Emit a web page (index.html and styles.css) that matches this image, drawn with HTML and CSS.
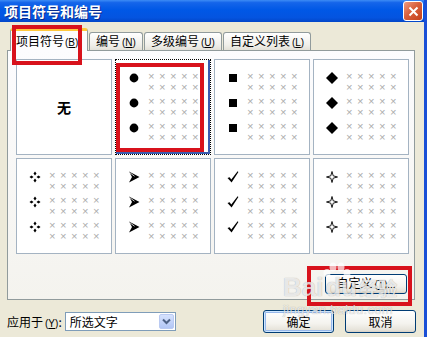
FILE: index.html
```html
<!DOCTYPE HTML>
<html lang="zh">
<head>
    <meta charset="UTF-8">
    <title>项目符号和编号</title>
    <link rel="stylesheet" href="styles.css">
</head>
<body>

    <!-- Bullet shapes -->
    <svg class="defs" width="0" height="0">
        <symbol id="dot" viewBox="0 0 12 12"><circle cx="6" cy="6" r="4.4"/></symbol>
        <symbol id="square" viewBox="0 0 12 12"><rect x="2" y="2" width="8" height="8"/></symbol>
        <symbol id="diamond" viewBox="0 0 12 12"><polygon points="6,0 12,6 6,12 0,6"/></symbol>
        <symbol id="cross" viewBox="0 0 12 12">
            <polygon points="6,0.5 7.5,2.5 6,4.5 4.5,2.5"/>
            <polygon points="6,7.5 7.5,9.5 6,11.5 4.5,9.5"/>
            <polygon points="0.5,6 2.5,4.5 4.5,6 2.5,7.5"/>
            <polygon points="7.5,6 9.5,4.5 11.5,6 9.5,7.5"/>
        </symbol>
        <symbol id="arrow" viewBox="0 0 12 12">
            <polygon points="1,0.5 11.5,6 1,11.5 4,6"/>
            <polyline points="1.5,1.5 6.5,5.2" fill="none" stroke="#fff" stroke-width="0.8"/>
        </symbol>
        <symbol id="check" viewBox="0 0 12 12"><polygon points="0.5,7 2.6,6.2 4.3,8.6 10.6,0.3 11.4,0.9 4.6,11.6"/></symbol>
        <symbol id="star" viewBox="0 0 12 12"><path d="M6 0.5 L7.2 4.8 L11.5 6 L7.2 7.2 L6 11.5 L4.8 7.2 L0.5 6 L4.8 4.8 Z" fill="#fff" stroke="#000" stroke-width="0.9"/></symbol>
    </svg>

    <div class="window">
        <div class="titlebar">
            <span class="title">项目符号和编号</span>
            <span class="close">
                <svg width="11" height="11" viewBox="0 0 11 11"><path d="M1.5 1.5 L9.5 9.5 M9.5 1.5 L1.5 9.5" stroke="#fff" stroke-width="2"/></svg>
            </span>
        </div>

        <div class="client">
            <div class="tabs">
                <div class="tab active">项目符号<span class="key">(<u>B</u>)</span></div>
                <div class="tab">编号<span class="key">(<u>N</u>)</span></div>
                <div class="tab">多级编号<span class="key">(<u>U</u>)</span></div>
                <div class="tab">自定义列表<span class="key">(<u>L</u>)</span></div>
            </div>

            <div class="panel">
                <div class="grid">
                    <div class="cell none">无</div>

                    <div class="cell selected">
                        <div class="group"><svg class="b"><use href="#dot"/></svg><div class="x">×××××<br>×××××</div></div>
                        <div class="group"><svg class="b"><use href="#dot"/></svg><div class="x">×××××<br>×××××</div></div>
                        <div class="group"><svg class="b"><use href="#dot"/></svg><div class="x">×××××<br>×××××</div></div>
                    </div>

                    <div class="cell">
                        <div class="group"><svg class="b"><use href="#square"/></svg><div class="x">×××××<br>×××××</div></div>
                        <div class="group"><svg class="b"><use href="#square"/></svg><div class="x">×××××<br>×××××</div></div>
                        <div class="group"><svg class="b"><use href="#square"/></svg><div class="x">×××××<br>×××××</div></div>
                    </div>

                    <div class="cell">
                        <div class="group"><svg class="b"><use href="#diamond"/></svg><div class="x">×××××<br>×××××</div></div>
                        <div class="group"><svg class="b"><use href="#diamond"/></svg><div class="x">×××××<br>×××××</div></div>
                        <div class="group"><svg class="b"><use href="#diamond"/></svg><div class="x">×××××<br>×××××</div></div>
                    </div>

                    <div class="cell">
                        <div class="group"><svg class="b"><use href="#cross"/></svg><div class="x">×××××<br>×××××</div></div>
                        <div class="group"><svg class="b"><use href="#cross"/></svg><div class="x">×××××<br>×××××</div></div>
                        <div class="group"><svg class="b"><use href="#cross"/></svg><div class="x">×××××<br>×××××</div></div>
                    </div>

                    <div class="cell">
                        <div class="group"><svg class="b"><use href="#arrow"/></svg><div class="x">×××××<br>×××××</div></div>
                        <div class="group"><svg class="b"><use href="#arrow"/></svg><div class="x">×××××<br>×××××</div></div>
                        <div class="group"><svg class="b"><use href="#arrow"/></svg><div class="x">×××××<br>×××××</div></div>
                    </div>

                    <div class="cell">
                        <div class="group"><svg class="b"><use href="#check"/></svg><div class="x">×××××<br>×××××</div></div>
                        <div class="group"><svg class="b"><use href="#check"/></svg><div class="x">×××××<br>×××××</div></div>
                        <div class="group"><svg class="b"><use href="#check"/></svg><div class="x">×××××<br>×××××</div></div>
                    </div>

                    <div class="cell">
                        <div class="group"><svg class="b"><use href="#star"/></svg><div class="x">×××××<br>×××××</div></div>
                        <div class="group"><svg class="b"><use href="#star"/></svg><div class="x">×××××<br>×××××</div></div>
                        <div class="group"><svg class="b"><use href="#star"/></svg><div class="x">×××××<br>×××××</div></div>
                    </div>
                </div>

                <div class="custom-row">
                    <button class="btn custom">自定义<span class="key">(<u>T</u>)...</span></button>
                </div>
            </div>

            <div class="footer">
                <span class="label">应用于<span class="key">(<u>Y</u>)</span>:</span>
                <div class="select">
                    <span class="value">所选文字</span>
                    <span class="arrow">
                        <svg width="9" height="7" viewBox="0 0 9 7"><path d="M1 1.5 L4.5 5 L8 1.5" fill="none" stroke="#4d6185" stroke-width="2"/></svg>
                    </span>
                </div>
                <div class="actions">
                    <button class="btn default">确定</button>
                    <button class="btn">取消</button>
                </div>
            </div>
        </div>

        <!-- red annotation boxes -->
        <div class="mark mark-tab"></div>
        <div class="mark mark-cell"></div>
        <div class="mark mark-btn"></div>

        <!-- watermark -->
        <div class="watermark">
            <div class="wm-logo">Bai<span class="wm-du">du</span><span class="wm-cn">经验</span></div>
            <div class="wm-url">jingyan.baidu.com</div>
            <svg class="wm-paw" width="30" height="16" viewBox="0 0 30 16">
                <ellipse cx="6" cy="11" rx="3.5" ry="4"/>
                <ellipse cx="12" cy="5" rx="3.5" ry="4.5"/>
                <ellipse cx="20" cy="5" rx="3.5" ry="4.5"/>
                <ellipse cx="26" cy="11" rx="3.5" ry="4"/>
            </svg>
        </div>
    </div>

</body>
</html>
```

FILE: styles.css
```css
* {
    margin: 0;
    padding: 0;
    box-sizing: border-box;
}

body {
    font-family: "Noto Sans CJK SC", sans-serif;
    font-size: 12px;
    color: #000;
    background: #ece9d8;
}

.defs {
    position: absolute;
}

.window {
    position: relative;
    width: 427px;
    height: 337px;
    background: #ece9d8;
    border-right: 3px solid #1a4fd6;
    overflow: hidden;
}

/* Title bar */
.titlebar {
    height: 22px;
    display: flex;
    align-items: center;
    padding: 0 1px 0 4px;
    background: linear-gradient(to bottom, #3d8cf5 0%, #1565ea 12%, #0058e6 45%, #0454e0 80%, #0346c8 100%);
}

.title {
    color: #fff;
    font-weight: bold;
    font-size: 14px;
    line-height: 22px;
    text-shadow: 1px 1px 0 #0a2a8a;
}

.close {
    margin-left: auto;
    width: 20px;
    height: 20px;
    border: 1px solid #fff;
    border-radius: 3px;
    background: linear-gradient(135deg, #ef9b80 0%, #d9603c 45%, #c4401c 100%);
    display: flex;
    align-items: center;
    justify-content: center;
}

/* Tabs */
.client {
    display: flex;
    flex-direction: column;
}

.tabs {
    display: flex;
    align-items: flex-end;
    height: 28px;
    padding-left: 10px;
    position: relative;
    z-index: 1;
}

.tab {
    height: 18px;
    padding: 0 6px;
    margin-right: 1px;
    border: 1px solid #919b9c;
    border-bottom: none;
    border-radius: 3px 3px 0 0;
    background: linear-gradient(to bottom, #ffffff, #f0efea 70%, #e3e1d8);
    line-height: 16px;
    white-space: nowrap;
}

.tab.active {
    width: 78px;
    height: 23px;
    padding: 0 0 0 5px;
    margin-bottom: -1px;
    border-top: 3px solid #ffc83c;
    background: #fcfcfe;
    line-height: 19px;
}

.key {
    font-family: "Liberation Sans", sans-serif;
    font-size: 10px;
    margin-left: 2px;
}

.tab.active .key {
    margin-left: 1px;
}

/* Panel */
.panel {
    height: 250px;
    margin: 0 9px 0 7px;
    padding: 8px 5px 0 8px;
    border: 1px solid #919b9c;
    background: linear-gradient(to bottom, #fcfcfe, #f4f3ee);
}

.grid {
    display: grid;
    grid-template-columns: repeat(4, 96px);
    grid-auto-rows: 96px;
    gap: 3px;
}

.cell {
    background: #fff;
    border: 1px solid #a4b3c2;
    padding: 12px 0 0 12px;
}

.cell.none {
    display: flex;
    align-items: center;
    justify-content: center;
    padding: 0;
    font-size: 14px;
    font-weight: bold;
}

.cell.selected {
    border: 1px dotted #000;
    box-shadow: inset -2px 0 0 #3a5bb0, inset 0 -2px 0 #3a5bb0;
}

.group {
    display: flex;
    gap: 8px;
    margin-bottom: 3px;
}

.b {
    width: 12px;
    height: 12px;
    flex: none;
}

.x {
    font-family: "Liberation Mono", monospace;
    font-size: 11px;
    line-height: 11px;
    letter-spacing: 4.4px;
    color: #ababab;
}

.custom-row {
    display: flex;
    justify-content: flex-end;
    margin-top: 20px;
    padding-right: 2px;
}

/* Buttons */
.btn {
    font-family: "Noto Sans CJK SC", sans-serif;
    font-size: 12px;
    color: #000;
    height: 23px;
    width: 71px;
    border: 1px solid #003c74;
    border-radius: 3px;
    background: linear-gradient(to bottom, #ffffff 0%, #f4f3ee 60%, #e6e3da 90%, #d6d0c5 100%);
}

.btn.custom {
    width: 82px;
    height: 20px;
    line-height: 16px;
}

.btn.default {
    box-shadow: inset 0 0 0 1px #cee7ff, inset 0 0 0 2px #98b8ea;
}

/* Footer */
.footer {
    display: flex;
    align-items: center;
    height: 23px;
    margin-top: 10px;
    padding: 0 8px 0 7px;
}

.label {
    white-space: nowrap;
}

.select {
    display: flex;
    align-items: center;
    width: 111px;
    height: 19px;
    margin-left: 3px;
    border: 1px solid #7f9db9;
    background: #fff;
    padding: 0 1px 0 4px;
}

.select .value {
    line-height: 17px;
}

.select .arrow {
    margin-left: auto;
    width: 15px;
    height: 15px;
    border: 1px solid #bacaf2;
    border-radius: 2px;
    background: linear-gradient(to bottom, #d6e2fd, #b2c6f5);
    display: flex;
    align-items: center;
    justify-content: center;
}

.actions {
    margin-left: auto;
    display: flex;
    gap: 11px;
}

/* Red annotation boxes */
.mark {
    position: absolute;
    border: 4px solid #d8121c;
    z-index: 3;
}

.mark-tab {
    left: 12px;
    top: 25px;
    width: 70px;
    height: 40px;
}

.mark-cell {
    left: 116px;
    top: 63px;
    width: 88px;
    height: 89px;
}

.mark-btn {
    left: 307px;
    top: 266px;
    width: 105px;
    height: 40px;
}

/* Watermark */
.watermark {
    position: absolute;
    left: 283px;
    top: 262px;
    width: 120px;
    height: 60px;
    z-index: 4;
    color: rgba(255, 255, 255, 0.75);
    text-shadow: 0 0 1px rgba(0, 0, 0, 0.35);
    pointer-events: none;
}

.wm-logo {
    font-family: "Liberation Sans", sans-serif;
    font-weight: bold;
    font-size: 26px;
    line-height: 26px;
    margin-top: 12px;
    white-space: nowrap;
}

.wm-du {
    margin-left: 2px;
}

.wm-cn {
    font-family: "Noto Sans CJK SC", sans-serif;
    font-size: 19px;
    margin-left: 2px;
}

.wm-url {
    font-family: "Liberation Sans", sans-serif;
    font-size: 13px;
    line-height: 14px;
    margin-top: 2px;
    letter-spacing: 0.3px;
}

.wm-paw {
    position: absolute;
    left: 38px;
    top: 0;
    fill: rgba(255, 255, 255, 0.7);
}
```
